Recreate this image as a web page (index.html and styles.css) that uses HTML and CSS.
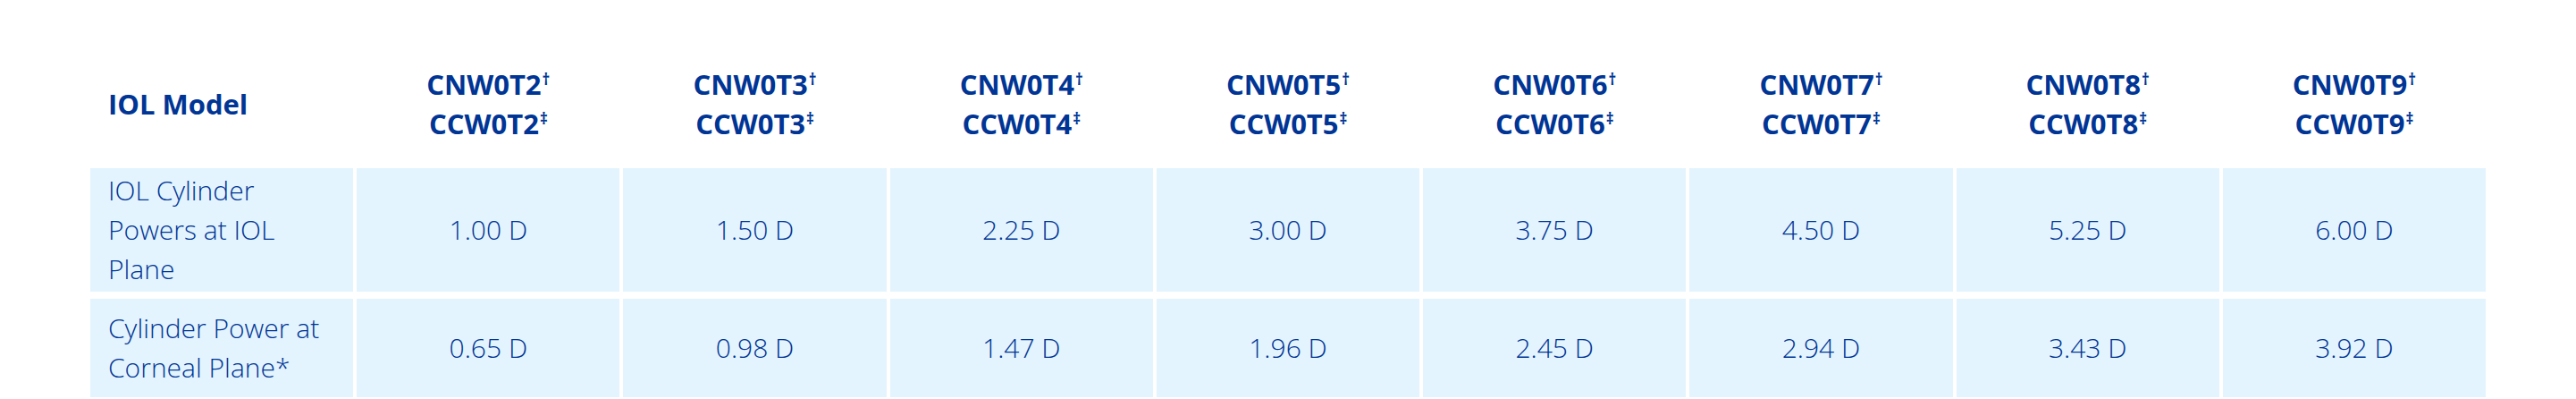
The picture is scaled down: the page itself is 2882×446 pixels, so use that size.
FILE: index.html
```html
<!DOCTYPE html>
<html lang="en">
<head>
<meta charset="utf-8">
<title>IOL Model Cylinder Powers</title>
<link rel="stylesheet" href="styles.css">
</head>
<body>
<div class="spec-table" role="table">
  <div class="cell head label" role="columnheader">IOL Model</div>
  <div class="cell head" role="columnheader"><span>CNW0T2<sup>†</sup></span><span>CCW0T2<sup>‡</sup></span></div>
  <div class="cell head" role="columnheader"><span>CNW0T3<sup>†</sup></span><span>CCW0T3<sup>‡</sup></span></div>
  <div class="cell head" role="columnheader"><span>CNW0T4<sup>†</sup></span><span>CCW0T4<sup>‡</sup></span></div>
  <div class="cell head" role="columnheader"><span>CNW0T5<sup>†</sup></span><span>CCW0T5<sup>‡</sup></span></div>
  <div class="cell head" role="columnheader"><span>CNW0T6<sup>†</sup></span><span>CCW0T6<sup>‡</sup></span></div>
  <div class="cell head" role="columnheader"><span>CNW0T7<sup>†</sup></span><span>CCW0T7<sup>‡</sup></span></div>
  <div class="cell head" role="columnheader"><span>CNW0T8<sup>†</sup></span><span>CCW0T8<sup>‡</sup></span></div>
  <div class="cell head" role="columnheader"><span>CNW0T9<sup>†</sup></span><span>CCW0T9<sup>‡</sup></span></div>

  <div class="cell body label" role="rowheader">IOL Cylinder Powers at IOL Plane</div>
  <div class="cell body" role="cell">1.00 D</div>
  <div class="cell body" role="cell">1.50 D</div>
  <div class="cell body" role="cell">2.25 D</div>
  <div class="cell body" role="cell">3.00 D</div>
  <div class="cell body" role="cell">3.75 D</div>
  <div class="cell body" role="cell">4.50 D</div>
  <div class="cell body" role="cell">5.25 D</div>
  <div class="cell body" role="cell">6.00 D</div>

  <div class="cell body label" role="rowheader">Cylinder Power at Corneal Plane*</div>
  <div class="cell body" role="cell">0.65 D</div>
  <div class="cell body" role="cell">0.98 D</div>
  <div class="cell body" role="cell">1.47 D</div>
  <div class="cell body" role="cell">1.96 D</div>
  <div class="cell body" role="cell">2.45 D</div>
  <div class="cell body" role="cell">2.94 D</div>
  <div class="cell body" role="cell">3.43 D</div>
  <div class="cell body" role="cell">3.92 D</div>
</div>
</body>
</html>
```

FILE: styles.css
```css
html, body {
  margin: 0;
  padding: 0;
  background: #ffffff;
}

body {
  font-family: "Open Sans", "Noto Sans", "Liberation Sans", sans-serif;
  color: #003595;
  font-size: 30px;
  line-height: 44px;
}

.spec-table {
  width: 2680px;
  margin: 72px auto 0;
  display: grid;
  grid-template-columns: repeat(9, 1fr);
  column-gap: 4px;
  row-gap: 8px;
}

.cell {
  display: flex;
  flex-direction: column;
  justify-content: center;
  align-items: center;
  text-align: center;
}

.cell.label {
  align-items: flex-start;
  text-align: left;
  padding-left: 20px;
  padding-right: 20px;
}

.head {
  font-weight: 700;
  font-size: 31px;
  padding-bottom: 20px;
}

.head sup {
  font-size: 17px;
  line-height: 0;
  vertical-align: 0;
  position: relative;
  top: -11px;
  margin-left: 1px;
}

.body {
  font-weight: 300;
  background: #e3f4fe;
  min-height: 110px;
  padding-top: 3px;
  padding-bottom: 3px;
  box-sizing: border-box;
}
```
